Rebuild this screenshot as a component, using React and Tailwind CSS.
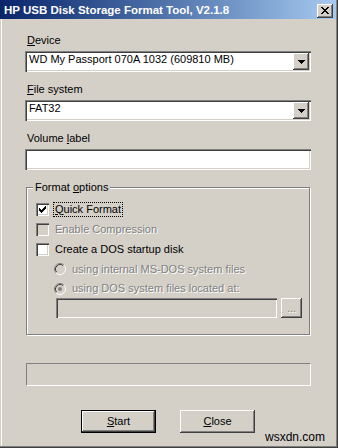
import React from "react";

const FONT = { fontFamily: '"Liberation Sans", Arial, sans-serif' };

const sunken =
  "shadow-[inset_1px_1px_#808080,inset_2px_2px_#404040,inset_-1px_-1px_#ffffff,inset_-2px_-2px_#d4d0c8]";
const raised =
  "shadow-[inset_-1px_-1px_#404040,inset_1px_1px_#ffffff,inset_-2px_-2px_#808080]";
const disabledText = "text-[#808080] [text-shadow:1px_1px_0_#ffffff]";

function Arrow() {
  const rows = [7, 5, 3, 1];
  return (
    <svg width="7" height="4" viewBox="0 0 7 4" shapeRendering="crispEdges">
      {rows.map((w, i) => (
        <rect key={i} x={(7 - w) / 2} y={i} width={w} height={1} fill="#000" />
      ))}
    </svg>
  );
}

function Combo({ value }) {
  return (
    <div className={`flex h-[21px] w-[286px] bg-white p-[2px] ${sunken}`}>
      <div className="flex-1 pl-[2px] text-[11px] leading-[13px] text-black">{value}</div>
      <div className={`flex h-[17px] w-[16px] items-center justify-center bg-[#d4d0c8] ${raised}`}>
        <Arrow />
      </div>
    </div>
  );
}

function Check({ checked, disabled }) {
  const cols = [
    [2, 3],
    [3, 3],
    [4, 3],
    [3, 3],
    [2, 3],
    [1, 3],
    [0, 3],
  ];
  return (
    <div className={`h-[13px] w-[13px] shrink-0 ${disabled ? "bg-[#d4d0c8]" : "bg-white"} ${sunken}`}>
      {checked && (
        <svg width="13" height="13" viewBox="0 0 13 13" shapeRendering="crispEdges">
          {cols.map(([r, h], c) => (
            <rect key={c} x={3 + c} y={3 + r} width={1} height={h} fill="#000" />
          ))}
        </svg>
      )}
    </div>
  );
}

function Radio({ selected }) {
  return (
    <svg width="12" height="12" viewBox="0 0 12 12" className="shrink-0">
      <circle cx="6" cy="6" r="4.5" fill="#d4d0c8" />
      <path d="M2.11 9.89 A5.5 5.5 0 0 1 9.89 2.11" stroke="#808080" fill="none" strokeWidth="1" />
      <path d="M2.82 9.18 A4.5 4.5 0 0 1 9.18 2.82" stroke="#404040" fill="none" strokeWidth="1" />
      <path d="M9.89 2.11 A5.5 5.5 0 0 1 2.11 9.89" stroke="#ffffff" fill="none" strokeWidth="1" />
      <path d="M9.18 2.82 A4.5 4.5 0 0 1 2.82 9.18" stroke="#d4d0c8" fill="none" strokeWidth="1" />
      {selected && <circle cx="6" cy="6" r="2" fill="#808080" />}
    </svg>
  );
}

function CloseX() {
  const px = [
    [0, 1, 6, 7],
    [1, 2, 5, 6],
    [2, 3, 4, 5],
    [3, 4],
    [2, 3, 4, 5],
    [1, 2, 5, 6],
    [0, 1, 6, 7],
  ];
  return (
    <svg width="8" height="7" viewBox="0 0 8 7" shapeRendering="crispEdges">
      {px.map((row, y) =>
        row.map((x) => <rect key={`${x}-${y}`} x={x} y={y} width={1} height={1} fill="#000" />)
      )}
    </svg>
  );
}

function Label({ children, focus, disabled }) {
  return (
    <span
      className={`ml-[4px] border px-[1px] text-[11px] leading-[13px] ${
        focus ? "border-dotted border-black" : "border-transparent"
      } ${disabled ? disabledText : "text-black"}`}
    >
      {children}
    </span>
  );
}

export default function App() {
  return (
    <div
      style={FONT}
      className="relative flex h-[448px] w-[338px] flex-col bg-[#d4d0c8] shadow-[inset_-1px_-1px_#404040,inset_-2px_-2px_#808080,inset_1px_0_#d4d0c8,inset_2px_0_#ffffff]"
    >
      {/* Title bar */}
      <div className="flex h-[19px] w-[336px] items-start bg-linear-to-r from-[#0a246a] to-[#a6caf0] pl-[4px]">
        <div className="flex-1 pt-[4px] text-[11.5px] font-bold leading-[13px] text-white">
          HP USB Disk Storage Format Tool, V2.1.8
        </div>
        <div
          className={`mr-[3px] mt-[4px] flex h-[14px] w-[16px] items-center justify-center bg-[#d4d0c8] pb-[1px] pr-[1px] ${raised}`}
        >
          <CloseX />
        </div>
      </div>

      <div className="flex flex-col pl-[25px] pt-[15px] text-[11px] leading-[13px] text-black">
        <div className="h-[13px] pl-[2px]">
          <u>D</u>evice
        </div>
        <div className="mt-[4px]">
          <Combo value="WD My Passport 070A 1032 (609810 MB)" />
        </div>

        <div className="mt-[11px] h-[13px] pl-[2px]">
          <u>F</u>ile system
        </div>
        <div className="mt-[4px]">
          <Combo value="FAT32" />
        </div>

        <div className="mt-[11px] h-[13px] pl-[2px]">
          Volume <u>l</u>abel
        </div>
        <div className={`mt-[4px] h-[21px] w-[286px] bg-white ${sunken}`} />

        {/* Format options group */}
        <div className="relative ml-[1px] mt-[17px] w-[284px] border border-[#808080] pb-[16px] pl-[9px] pt-[11px] shadow-[inset_1px_1px_#ffffff,1px_1px_#ffffff]">
          <div className="absolute left-[6px] top-[-7px] bg-[#d4d0c8] px-[2px] text-[11px] leading-[13px]">
            Format <u>o</u>ptions
          </div>

          <div className="flex h-[20px] items-center">
            <Check checked />
            <Label focus>
              <u>Q</u>uick Format
            </Label>
          </div>
          <div className="flex h-[20px] items-center">
            <Check disabled />
            <Label disabled>Enable Compression</Label>
          </div>
          <div className="flex h-[20px] items-center">
            <Check />
            <Label>Create a DOS startup disk</Label>
          </div>
          <div className="flex h-[20px] items-center pl-[18px]">
            <Radio />
            <span className="ml-[6px]">
              <span className={disabledText}>using internal MS-DOS system files</span>
            </span>
          </div>
          <div className="flex h-[19px] items-center pl-[18px]">
            <Radio selected />
            <span className="ml-[6px]">
              <span className={disabledText}>using DOS system files located at:</span>
            </span>
          </div>
          <div className="flex h-[20px] gap-[4px] pl-[20px]">
            <div className={`h-[20px] w-[221px] bg-[#d4d0c8] ${sunken}`} />
            <div
              className={`flex h-[20px] w-[21px] items-center justify-center bg-[#d4d0c8] text-[11px] leading-[13px] ${raised} ${disabledText}`}
            >
              ...
            </div>
          </div>
        </div>

        {/* Progress */}
        <div className="ml-[1px] mt-[28px] h-[23px] w-[285px] border-b border-l border-r border-t border-b-white border-l-[#808080] border-r-white border-t-[#808080]" />

        {/* Buttons */}
        <div className="ml-[56px] mt-[24px] flex gap-[24px]">
          <div className="h-[23px] w-[75px] border border-black">
            <div
              className={`flex h-full w-full items-center justify-center bg-[#d4d0c8] ${raised}`}
            >
              <span>
                <u>S</u>tart
              </span>
            </div>
          </div>
          <div
            className={`flex h-[23px] w-[75px] items-center justify-center bg-[#d4d0c8] ${raised}`}
          >
            <span>
              <u>C</u>lose
            </span>
          </div>
        </div>
      </div>

      <div className="absolute left-[265px] top-[430px] text-[12px] leading-[14px] text-black">
        wsxdn.com
      </div>
    </div>
  );
}
